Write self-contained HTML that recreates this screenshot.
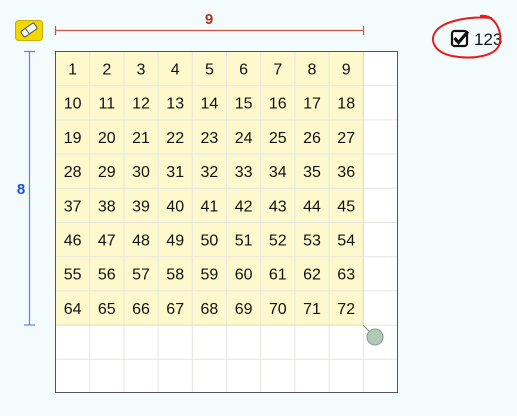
<!DOCTYPE html>
<html><head><style>
body{margin:0;width:517px;height:416px;background:#f4fbfd;overflow:hidden;font-family:"Liberation Sans",Arial,sans-serif}
</style></head><body>
<svg width="517" height="416" xmlns="http://www.w3.org/2000/svg" style="position:absolute;left:0;top:0">
<rect x="55.5" y="51.5" width="342" height="341" fill="#fff"/>
<rect x="55.5" y="51.5" width="307.8" height="273.6" fill="#fdf9cc"/>
<g stroke="#e6e6e0" stroke-width="1">
<line x1="89.7" y1="52" x2="89.7" y2="392"/><line x1="123.9" y1="52" x2="123.9" y2="392"/><line x1="158.1" y1="52" x2="158.1" y2="392"/><line x1="192.3" y1="52" x2="192.3" y2="392"/><line x1="226.5" y1="52" x2="226.5" y2="392"/><line x1="260.7" y1="52" x2="260.7" y2="392"/><line x1="294.9" y1="52" x2="294.9" y2="392"/><line x1="329.1" y1="52" x2="329.1" y2="392"/><line x1="363.3" y1="52" x2="363.3" y2="392"/>
<line x1="56" y1="85.7" x2="397" y2="85.7"/><line x1="56" y1="119.9" x2="397" y2="119.9"/><line x1="56" y1="154.1" x2="397" y2="154.1"/><line x1="56" y1="188.3" x2="397" y2="188.3"/><line x1="56" y1="222.5" x2="397" y2="222.5"/><line x1="56" y1="256.7" x2="397" y2="256.7"/><line x1="56" y1="290.9" x2="397" y2="290.9"/><line x1="56" y1="325.1" x2="397" y2="325.1"/><line x1="56" y1="359.3" x2="397" y2="359.3"/>
</g>
<line x1="363.3" y1="52" x2="363.3" y2="325" stroke="#e4e0b0"/>
<line x1="56" y1="325.1" x2="363" y2="325.1" stroke="#e4e0b0"/>
<rect x="55.5" y="51.5" width="342" height="341" fill="none" stroke="#555" stroke-width="1"/>
<g font-size="16" fill="#111" text-anchor="middle" font-family="Liberation Sans, Arial, sans-serif" id="nums"></g>
<line x1="363" y1="325" x2="375" y2="337" stroke="#888"/>
<circle cx="375" cy="337" r="8" fill="#afcbb8" stroke="#8a9a90"/>
<g stroke="#c8553d" stroke-width="1.2"><line x1="55.5" y1="30.5" x2="363.5" y2="30.5"/><line x1="55.5" y1="26" x2="55.5" y2="35"/><line x1="363.5" y1="26" x2="363.5" y2="35"/></g>
<text x="209" y="24" fill="#b5341e" font-size="15" font-weight="bold" text-anchor="middle">9</text>
<g stroke="#5b86e0" stroke-width="1.2"><line x1="29.5" y1="51" x2="29.5" y2="325"/><line x1="24" y1="51.5" x2="35" y2="51.5"/><line x1="24" y1="325" x2="35" y2="325"/></g>
<text x="21" y="194" fill="#1a4fe0" font-size="15" font-weight="bold" text-anchor="middle">8</text>
<rect x="15.5" y="20.5" width="27" height="20" rx="3" fill="#f2d600" stroke="#c9b000"/>
<g transform="translate(29 30) rotate(-35)"><rect x="-8" y="-3.5" width="16" height="7" rx="1.5" fill="#fff" stroke="#555"/><line x1="-2" y1="-3.5" x2="-2" y2="3.5" stroke="#555"/></g>
<rect x="452" y="31" width="15" height="15" rx="2.5" fill="#fff" stroke="#111" stroke-width="2.2"/>
<path d="M454.5 38 L458.5 42.5 L468 31.5" fill="none" stroke="#111" stroke-width="3.2"/>
<text x="474" y="45" font-size="17" fill="#111">123</text>
<path d="M480 16 C494 14 502 30 500 42 C498 56 474 60 452 56 C434 52 429 40 436 31 C444 21 468 16 492 18" fill="none" stroke="#e51b1b" stroke-width="2"/>
</svg>
<script>
var g=document.getElementById('nums'),s='';
for(var r=0;r<8;r++)for(var c=0;c<9;c++){s+='<text x="'+(72.6+c*34.2)+'" y="'+(74.5+r*34.2)+'">'+(r*9+c+1)+'</text>';}
g.innerHTML=s;
</script>
</body></html>
